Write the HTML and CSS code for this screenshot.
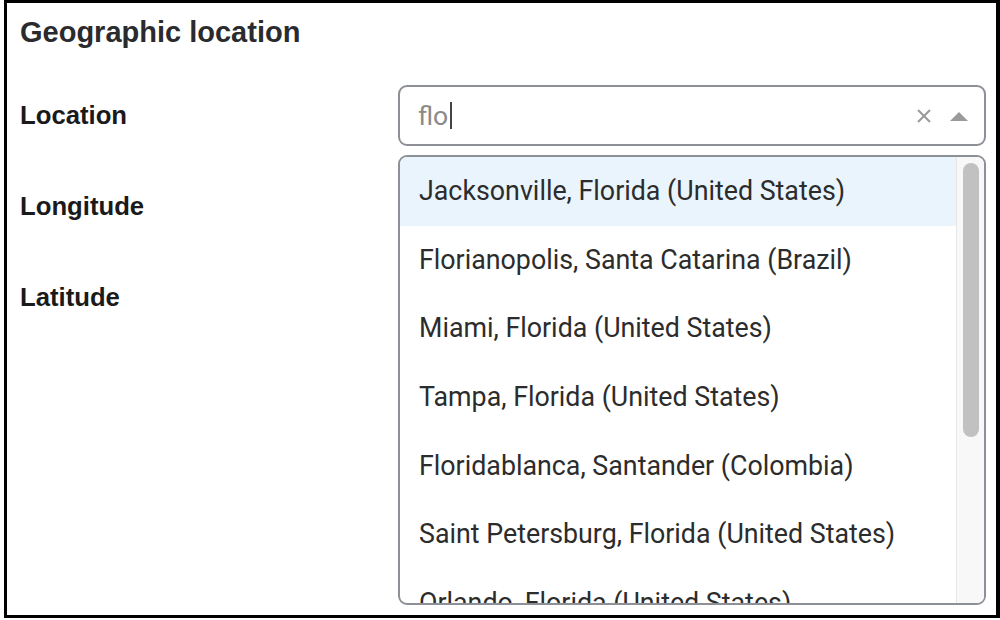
FILE: index.html
```html
<!DOCTYPE html>
<html lang="en">
  <head>
    <meta charset="UTF-8" />
    <meta name="viewport" content="width=device-width, initial-scale=1.0" />
    <title>Geographic location</title>
    <link rel="stylesheet" href="styles.css">
  </head>
  <body>
    <div class="frame">
      <h2 class="title">Geographic location</h2>
      <div class="fields">
        <div class="row">
          <label class="label">Location</label>
          <div class="select">
            <div class="control">
              <span class="value">flo</span><span class="caret"></span>
              <span class="clear">
                <svg width="16" height="16" viewBox="0 0 16 16">
                  <path d="M2 2 L14 14 M14 2 L2 14" stroke="#9a9a9a" stroke-width="2" fill="none" />
                </svg>
              </span>
              <span class="arrow">
                <svg width="18" height="10" viewBox="0 0 18 10">
                  <path d="M0 10 L9 1 L18 10 Z" fill="#9a9a9a" />
                </svg>
              </span>
            </div>
            <div class="menu">
              <div class="options">
                <div class="option active">Jacksonville, Florida (United States)</div>
                <div class="option">Florianopolis, Santa Catarina (Brazil)</div>
                <div class="option">Miami, Florida (United States)</div>
                <div class="option">Tampa, Florida (United States)</div>
                <div class="option">Floridablanca, Santander (Colombia)</div>
                <div class="option">Saint Petersburg, Florida (United States)</div>
                <div class="option">Orlando, Florida (United States)</div>
              </div>
              <div class="scrollbar"><div class="thumb"></div></div>
            </div>
          </div>
        </div>
        <div class="row">
          <label class="label">Longitude</label>
        </div>
        <div class="row">
          <label class="label">Latitude</label>
        </div>
      </div>
    </div>
  </body>
</html>
```

FILE: styles.css
```css
body {
  margin: 0;
  background-color: white;
  font-family: "Liberation Sans", Arial, sans-serif;
}

.frame {
  box-sizing: border-box;
  width: 996px;
  height: 618px;
  margin-left: 4px;
  padding: 13px 0 0 13px;
  border: 3px solid black;
  border-right-width: 4px;
  overflow: hidden;
}

.title {
  margin: 0;
  font-size: 29px;
  line-height: 33px;
  font-weight: bold;
  color: #2a2b2e;
}

.fields {
  margin-top: 36px;
  display: flex;
  flex-direction: column;
  gap: 30px;
}

.row {
  display: flex;
  align-items: center;
  height: 61px;
}

.label {
  width: 378px;
  font-size: 25.7px;
  font-weight: bold;
  color: #1a1a1a;
}

.select {
  position: relative;
  width: 588px;
}

.control {
  box-sizing: border-box;
  height: 61px;
  display: flex;
  align-items: center;
  padding: 0 16px 0 18px;
  border: 2px solid #8d9197;
  border-radius: 9px;
  font-family: Roboto, "Liberation Sans", sans-serif;
  font-size: 26.5px;
  color: #8a8a8a;
}

.caret {
  width: 1.5px;
  height: 27px;
  margin-left: 2px;
  background-color: #444;
}

.clear {
  margin-left: auto;
  display: flex;
}

.arrow {
  display: flex;
  margin-left: 18px;
}

.menu {
  position: absolute;
  top: 70px;
  left: 0;
  box-sizing: border-box;
  width: 588px;
  height: 450px;
  display: flex;
  border: 2px solid #8d9197;
  border-radius: 9px;
  overflow: hidden;
  background-color: white;
}

.options {
  flex: 1;
  overflow: hidden;
}

.option {
  height: 68.6px;
  display: flex;
  align-items: center;
  padding-left: 19px;
  font-family: Roboto, "Liberation Sans", sans-serif;
  font-size: 26.8px;
  color: #2c2c2c;
  white-space: nowrap;
}

.option.active {
  background-color: #eaf4fd;
}

.scrollbar {
  width: 28px;
  padding: 6px 0;
  box-sizing: border-box;
  border-left: 1px solid #e6e6e6;
  background-color: #f8f8f8;
  display: flex;
  justify-content: center;
}

.thumb {
  width: 16px;
  height: 274px;
  border-radius: 8px;
  background-color: #c1c1c1;
}
```
